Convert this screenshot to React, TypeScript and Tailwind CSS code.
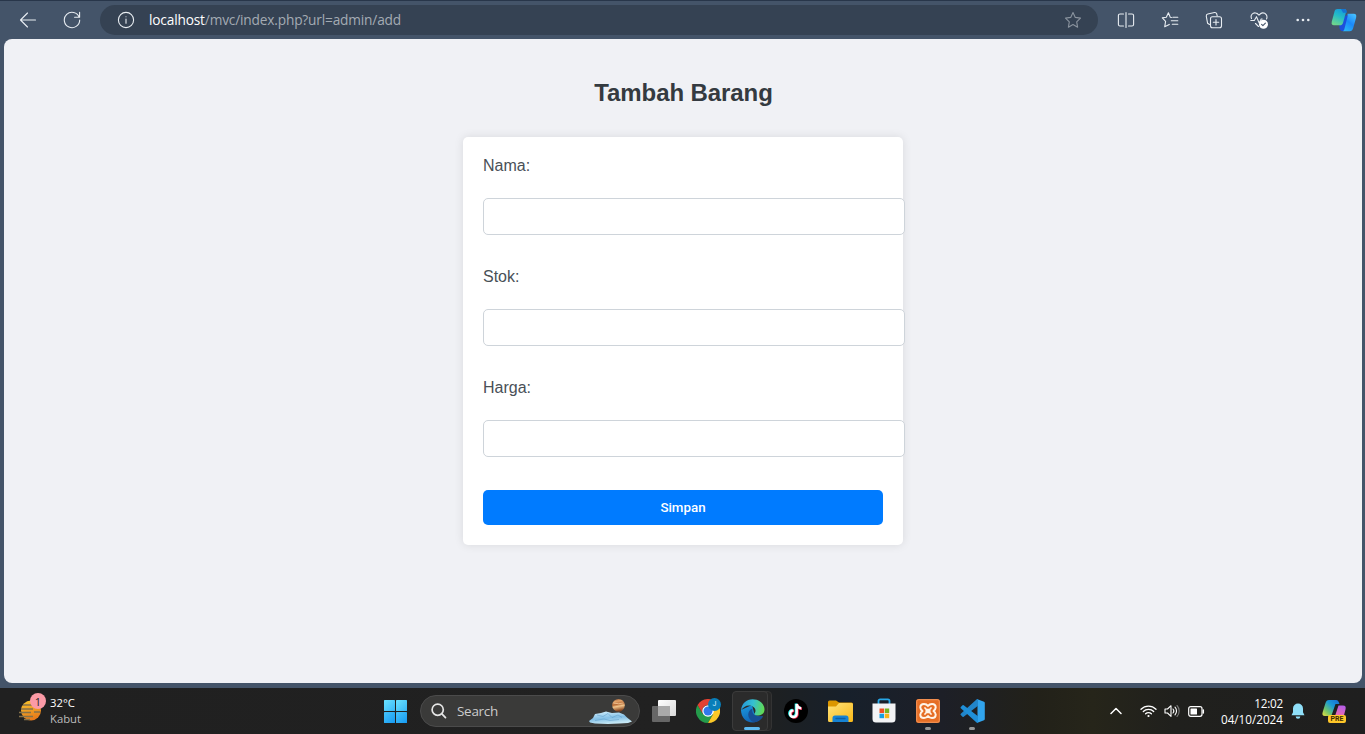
import React from "react";

const UI = "font-['Open_Sans','Noto_Sans',sans-serif]";

function Slot({ children, className = "w-11" }: { children: React.ReactNode; className?: string }) {
  return <div className={`flex h-full shrink-0 items-center justify-center ${className}`}>{children}</div>;
}

function Line({ children, size = 18, color = "#e8edf2", width = 1.1 }: { children: React.ReactNode; size?: number; color?: string; width?: number }) {
  return (
    <svg width={size} height={size} viewBox={`0 0 ${size} ${size}`} fill="none" stroke={color} strokeWidth={width} strokeLinecap="round" strokeLinejoin="round">
      {children}
    </svg>
  );
}

function BrowserBar() {
  return (
    <header className="flex h-[39px] shrink-0 items-center border-t border-[#28364a] bg-[#445469] pl-1.5">
      <Slot>
        <Line>
          <path d="M16.500 9H1.5M8.500 2L1.500 9l7 7" />
        </Line>
      </Slot>
      <Slot>
        <Line>
          <path d="M16.2 6.2A7.7 7.7 0 1 0 16.7 9M16.6 1.2v5h-5" />
        </Line>
      </Slot>
      <div className="ml-1.5 flex h-[30px] w-[998px] shrink-0 items-center rounded-full bg-[#354253] pl-[17px] pr-4">
        <Line>
          <circle cx="9" cy="9" r="7.6" />
          <path d="M9 8v4.300M9 5.700v.1" />
        </Line>
        <div className={`ml-3.5 flex-1 whitespace-nowrap text-[13.7px] leading-5 tracking-[-0.17px] text-[#a4abb3] ${UI}`}>
          <span className="text-white">localhost</span>/mvc/index.php?url=admin/add
        </div>
        <Line color="#8a939e">
          <path d="M9 1.5l2.3 4.9 5.2.7-3.8 3.7.9 5.4L9 13.6l-4.6 2.6.9-5.4L1.5 7.1l5.2-.7z" />
        </Line>
      </div>
      <div className="ml-1.5 flex h-full">
        <Slot>
          <Line>
            <path d="M6.500 3H3a1.600 1.600 0 0 0-1.600 1.600v8.800A1.600 1.600 0 0 0 3 15h3.500M9 1.500v15M11.500 3H15a1.600 1.600 0 0 1 1.600 1.600v8.800A1.600 1.600 0 0 1 15 15h-3.500" />
          </Line>
        </Slot>
        <Slot>
          <Line>
            <path d="M10.500 6.500L9.300 6.300 7.400 1.800 5.300 6.300 1.300 6.900 4.600 10.300 3.700 15.800 8.300 13.400M11.800 6.200h5M10.300 9.700h6.500M11.300 13.200h5.500" />
          </Line>
        </Slot>
        <Slot>
          <Line>
            <path d="M4.500 13.500L2.600 12.300 1.300 5.300a2 2 0 0 1 1.500-2.300L9.500 1.500a2 2 0 0 1 2.200 1.300l.5 2" />
            <rect x="5.500" y="5.700" width="11" height="11" rx="2" />
            <path d="M11 8.500v5.400M8.300 11.200h5.400" />
          </Line>
        </Slot>
        <Slot className="w-[46px]">
          <Line>
            <path d="M8.500 15.500L5.500 12.500M1.500 7.500C0 4 3 1.500 5.500 1.900 7.300 2 8 3.200 9 4.200 10 3.200 10.800 2 12.500 1.900 15.500 1.700 18 4.500 16.500 8M.8 9.500h3.500L6.500 5.700l2.700 6.300 2-4h1" />
            <circle cx="13.500" cy="13.300" r="4.500" fill="#fff" stroke="none" />
            <path d="M11.600 13.400l1.300 1.300 2.500-2.600" stroke="#445469" />
          </Line>
        </Slot>
        <Slot className="w-[42px]">
          <svg width="14" height="4" fill="#e8edf2">
            <circle cx="1.700" cy="2" r="1.300" />
            <circle cx="7" cy="2" r="1.300" />
            <circle cx="12.300" cy="2" r="1.300" />
          </svg>
        </Slot>
        <Slot className="w-10">
          <CopilotMark />
        </Slot>
      </div>
    </header>
  );
}

function CopilotMark() {
  return (
    <svg width="26" height="24" viewBox="0 0 26 24">
      <defs>
        <linearGradient id="cpA" x1="0.700" y1="0" x2="0.300" y2="1">
          <stop stopColor="#149add" />
          <stop offset="0.450" stopColor="#25bcc6" />
          <stop offset="1" stopColor="#71d68b" />
        </linearGradient>
        <linearGradient id="cpB" x1="0.800" y1="0" x2="0.200" y2="1">
          <stop stopColor="#45bfff" />
          <stop offset="0.500" stopColor="#1a88fa" />
          <stop offset="1" stopColor="#2bb6f7" />
        </linearGradient>
      </defs>
      <path d="M8.500 16.500l6-9H18l-4.500 15.500h-2c-2.500 0-3.500-2.500-3-6.500z" fill="#1c50dc" />
      <path d="M6.500 1h7c1.500 0 2 1 1.700 2.500L12 15c-.6 1.700-1.500 2.300-3.200 2.300H3C.8 17.300.2 16 .8 13.500l2.700-10C4 1.700 5 1 6.500 1z" fill="url(#cpA)" />
      <path d="M10 1h3.500c1.500 0 2 1.200 2.600 3.800h-4z" fill="#1673d2" />
      <path d="M16.500 5.800h6.300c2.200 0 2.900 1.500 2.300 4l-3 10.500c-.6 2-1.500 2.900-3.500 2.900h-7c1.400-.3 1.600-1.300 2-2.900l3-12z" fill="url(#cpB)" />
    </svg>
  );
}

function Field({ label }: { label: string }) {
  return (
    <div className="mb-[33px]">
      <label className="block text-base leading-[18px] text-[#495057]">{label}</label>
      <input className="mt-[23px] block h-[37px] w-[422px] rounded-[5px] border border-[#ced4da] bg-white px-2.5 outline-none" />
    </div>
  );
}

function FormPage() {
  return (
    <main className="mx-1 mr-[3px] flex flex-1 flex-col items-center rounded-lg bg-[#f0f1f5] pt-10 font-['Liberation_Sans',Arial,sans-serif]">
      <h1 className="pl-px text-2xl font-bold leading-7 tracking-[-0.08px] text-[#343a40]">Tambah Barang</h1>
      <form className="mt-[30px] h-[408px] w-[440px] rounded-[5px] bg-white p-5 shadow-[0_0_10px_rgba(0,0,0,0.1)]">
        <Field label="Nama:" />
        <Field label="Stok:" />
        <Field label="Harga:" />
        <button type="button" className="flex h-[35px] w-full items-center justify-center rounded-[5px] bg-[#007bff] font-['Roboto',sans-serif] text-[13.333px] font-medium text-white">
          Simpan
        </button>
      </form>
    </main>
  );
}

function WeatherIcon() {
  return (
    <div className="relative h-7 w-7 shrink-0">
      <svg width="28" height="28" viewBox="0 0 28 28">
        <defs>
          <linearGradient id="sun" x1="0" y1="0" x2="0.300" y2="1">
            <stop stopColor="#f8c62d" />
            <stop offset="1" stopColor="#e77b1c" />
          </linearGradient>
        </defs>
        <circle cx="13" cy="13.500" r="10" fill="url(#sun)" />
        <path d="M5 8h10M3 12h12M1 15.500h12M16 15h6M1 19.500h14M6 22.500h6" stroke="#85724a" strokeWidth="1.500" />
      </svg>
      <span className={`absolute -top-1 left-3 flex h-4 w-4 items-center justify-center rounded-full bg-[#fb9aa6] text-[11px] leading-none text-[#242424] ${UI}`}>1</span>
    </div>
  );
}

function StartIcon() {
  return (
    <svg width="23" height="23" viewBox="0 0 23 23">
      <defs>
        <linearGradient id="win" x1="0" y1="0" x2="1" y2="1">
          <stop stopColor="#6be2ff" />
          <stop offset="1" stopColor="#38b8f8" />
        </linearGradient>
        <linearGradient id="winB" x1="0" y1="0" x2="1" y2="1">
          <stop stopColor="#45c3fb" />
          <stop offset="1" stopColor="#169af2" />
        </linearGradient>
      </defs>
      <rect width="11" height="11" rx="0.600" fill="url(#win)" />
      <rect x="12" width="11" height="11" rx="0.600" fill="url(#win)" />
      <rect y="12" width="11" height="11" rx="0.600" fill="url(#winB)" />
      <rect x="12" y="12" width="11" height="11" rx="0.600" fill="url(#winB)" />
    </svg>
  );
}

function SearchArt() {
  return (
    <svg width="44" height="26" viewBox="0 0 44 26">
      <defs>
        <linearGradient id="planet" x1="0" y1="0" x2="0.200" y2="1">
          <stop stopColor="#8b4d2b" />
          <stop offset="0.250" stopColor="#e1a36a" />
          <stop offset="0.500" stopColor="#b66a36" />
          <stop offset="0.650" stopColor="#f1c58c" />
          <stop offset="1" stopColor="#87451f" />
        </linearGradient>
        <linearGradient id="ice" x1="0" y1="0" x2="0.300" y2="1">
          <stop stopColor="#d8f3ff" />
          <stop offset="0.600" stopColor="#83bfe5" />
          <stop offset="1" stopColor="#c5e7f5" />
        </linearGradient>
      </defs>
      <path d="M0 23l4-3 2-4 6-1 5-1.500 6 1.500 7-.5 5 2 3 3 5 4-4 1.500-8 .5-12 .5-13-.5-5-1z" fill="url(#ice)" />
      <path d="M8 17l6 1.500 5-3 4 4 6-2.500 4 2.500M6 22.500l9-1.500 6 1.500 9-1" stroke="#5897c5" strokeWidth="1" fill="none" opacity="0.500" />
      <circle cx="29.500" cy="7.200" r="6.300" fill="url(#planet)" />
      <path d="M24.500 5q5 1.500 10 0" stroke="#f5cd9c" strokeWidth="0.800" fill="none" />
    </svg>
  );
}

function TaskViewIcon() {
  return (
    <svg width="24" height="24" viewBox="0 0 24 24">
      <defs>
        <linearGradient id="tv" x1="0" y1="0" x2="1" y2="1">
          <stop stopColor="#fff" />
          <stop offset="1" stopColor="#dadada" />
        </linearGradient>
      </defs>
      <rect y="7" width="18" height="16" rx="1" fill="#666" />
      <rect x="6" y="1" width="18" height="16" rx="1" fill="url(#tv)" />
      <path d="M6 7h12v10H6z" fill="#a9a9a9" />
    </svg>
  );
}

function ChromeIcon() {
  return (
    <div className="relative h-6 w-6">
      <svg width="24" height="24" viewBox="0 0 24 24">
        <path d="M1.600 6A12 12 0 0 1 22.400 6H12z" fill="#e34133" />
        <path d="M1.600 6A12 12 0 0 0 12 24l5.200-9L12 12 6.800 15z" fill="#249b4b" />
        <path d="M12 6h10.400A12 12 0 0 1 12 24l5.200-9z" fill="#fbc827" />
        <path d="M1.600 6l5.200 9A6 6 0 0 1 12 6z" fill="#e34133" />
        <circle cx="12" cy="12" r="5.800" fill="#fff" />
        <circle cx="12" cy="12" r="4.500" fill="#3079eb" />
      </svg>
      <span className="absolute -top-px left-3 flex h-[13px] w-[13px] items-center justify-center rounded-full bg-[#087eb9] font-['Roboto',sans-serif] text-[7px] leading-none text-[#d6efff]">J</span>
    </div>
  );
}

function EdgeIcon() {
  return (
    <svg width="25" height="24" viewBox="0 0 25 24">
      <defs>
        <linearGradient id="edA" x1="0" y1="0.300" x2="1" y2="0.450">
          <stop stopColor="#2596d9" />
          <stop offset="0.500" stopColor="#35c0d1" />
          <stop offset="1" stopColor="#61db51" />
        </linearGradient>
        <linearGradient id="edB" x1="0" y1="0" x2="0.500" y2="1">
          <stop stopColor="#1c9ce1" />
          <stop offset="1" stopColor="#1062b4" />
        </linearGradient>
      </defs>
      <path d="M1 11c0 7 5 12.500 11.500 12.500 4.500 0 8.300-2.200 10.200-5.700.2-.5-.2-.8-.7-.6-3 1-7-.1-7.700-2.700L12 6z" fill="url(#edB)" />
      <path d="M1 11.500C1.600 4.500 6.500.3 12.500.3 20 .3 24.500 5.500 24.500 10.500c0 4-3 6-6.300 6-2.500 0-4-.8-3.900-1.600.1-.7 1.200-1.200 1.200-3.200 0-3.200-3.200-5.200-6.500-5.200C5.700 6.500 2.700 8.500 1 11.500z" fill="url(#edA)" />
      <path d="M12.300 9.800c-5 1.500-6.300 9.500 1.500 13.600 3.700-.3 7-2.600 8.900-5.600.2-.5-.2-.8-.7-.6-4 1.200-10.700-.5-9.700-7.400z" fill="#174e94" />
    </svg>
  );
}

function TikTokIcon() {
  const note = "M12.700 5v9.700a3.300 3.300 0 1 1-3.300-3.300M12.700 5c.4 2.700 2 4 4.500 4.200";
  return (
    <svg width="24" height="24" viewBox="0 0 24 24" fill="none" strokeWidth="2.400">
      <circle cx="12" cy="12" r="12" fill="#000" />
      <path d={note} stroke="#25f4ee" transform="translate(-.8 -.5)" />
      <path d={note} stroke="#fe2c55" transform="translate(.8 .5)" />
      <path d={note} stroke="#fff" />
    </svg>
  );
}

function FolderIcon() {
  return (
    <svg width="25" height="23" viewBox="0 0 25 23">
      <defs>
        <linearGradient id="fold" x1="0" y1="0" x2="1" y2="1">
          <stop stopColor="#ffe37b" />
          <stop offset="1" stopColor="#f8b817" />
        </linearGradient>
      </defs>
      <path d="M0 2a1.500 1.500 0 0 1 1.500-1.500H8l3 2h12.500A1.500 1.500 0 0 1 25 4v8H0z" fill="#dc9700" />
      <path d="M0 6.500h8L11 3h12.500A1.500 1.500 0 0 1 25 4.500v16a1.500 1.500 0 0 1-1.500 1.500h-22A1.500 1.500 0 0 1 0 20.500z" fill="url(#fold)" />
      <path d="M4.500 22v-4a2.500 2.500 0 0 1 2.500-2.500h11a2.500 2.500 0 0 1 2.500 2.500v4z" fill="#1683d4" />
      <path d="M8 18.500h9" stroke="#0b5fa7" strokeWidth="1.300" strokeLinecap="round" />
    </svg>
  );
}

function StoreIcon() {
  return (
    <svg className="-mt-px" width="24" height="25" viewBox="0 0 24 25">
      <path d="M6.500 7V3a1.600 1.600 0 0 1 1.600-1.600h7.800A1.600 1.600 0 0 1 17.500 3v4" stroke="#27a7e7" strokeWidth="1.800" fill="none" />
      <path d="M.5 5.500h23V21a3.500 3.500 0 0 1-3.500 3.500H4A3.500 3.500 0 0 1 .5 21z" fill="#f2f3f5" />
      <path d="M7.500 10.500H12V15H7.500z" fill="#f05025" />
      <path d="M12.700 10.500h4.500V15h-4.500z" fill="#78b420" />
      <path d="M7.500 15.700H12v4.500H7.500z" fill="#18a0e2" />
      <path d="M12.700 15.700h4.500v4.500h-4.500z" fill="#f8b51c" />
    </svg>
  );
}

function XamppIcon() {
  return (
    <svg width="24" height="24" viewBox="0 0 24 24">
      <rect width="24" height="24" rx="2.500" fill="#e66e25" />
      <rect x="0.700" y="0.700" width="22.600" height="22.600" rx="2" fill="none" stroke="#f2955a" strokeWidth="1" />
      <path
        d="M12 7C10.800 5.300 9.500 5 8 5 5.800 5 4.300 6.500 4.300 8.500c0 1.500.9 2.400 2.200 3.500C5.200 13 4.300 14 4.300 15.500 4.300 17.500 5.800 19 8 19c1.500 0 2.800-.5 4-2 1.200 1.500 2.500 2 4 2 2.200 0 3.700-1.500 3.700-3.500 0-1.500-.9-2.500-2.200-3.500 1.300-1.100 2.200-2 2.200-3.500C19.700 6.500 18.200 5 16 5c-1.500 0-2.800.3-4 2z"
        fill="none"
        stroke="#fff4e8"
        strokeWidth="2"
        strokeLinejoin="round"
      />
      <path d="M9 9l1.300 1.500h3.400L15 9M9 15l1.300-1.500h3.400L15 15M10 12h4" fill="none" stroke="#fff4e8" strokeWidth="1.700" strokeLinecap="round" strokeLinejoin="round" />
    </svg>
  );
}

function CodeIcon() {
  return (
    <svg width="25" height="24" viewBox="0 0 25 24">
      <path d="M17.500.2l6.500 2.500a1.300 1.300 0 0 1 .8 1.200v16.200a1.300 1.300 0 0 1-.8 1.200l-6.500 2.500z" fill="#31a4ed" />
      <path d="M18 .2v6.600L3.700 17.800a1 1 0 0 1-1.200 0L.8 16a.9.900 0 0 1 0-1.300L16.500.5c.4-.4 1-.5 1.500-.3z" fill="#2185ca" />
      <path d="M18 23.800v-6.600L3.700 6.200a1 1 0 0 0-1.200 0L.8 8a.9.900 0 0 0 0 1.300l15.700 14.200c.4.400 1 .5 1.500.3z" fill="#1f8fd8" />
    </svg>
  );
}

function TaskItem({ children, running = false }: { children: React.ReactNode; running?: boolean }) {
  return (
    <div className="relative flex h-full w-11 shrink-0 items-center justify-center">
      {children}
      {running && <span className="absolute bottom-1 left-[19px] h-[3px] w-1.5 rounded-full bg-[#969696]" />}
    </div>
  );
}

function Tray() {
  return (
    <div className="ml-auto flex h-full items-center pr-[17px]">
      <svg className="mr-[18px]" width="12" height="8" fill="none" stroke="#fff" strokeWidth="1.500" strokeLinecap="round" strokeLinejoin="round">
        <path d="M1 6.500L6 1.500l5 5" />
      </svg>
      <svg width="17" height="14" viewBox="0 0 17 14" fill="none" stroke="#fff" strokeWidth="1.300" strokeLinecap="round">
        <path d="M1 5.200a10.500 10.500 0 0 1 15 0M3.300 7.500a7.300 7.300 0 0 1 10.400 0M5.600 9.800a4.100 4.100 0 0 1 5.800 0" />
        <circle cx="8.500" cy="12" r="1.100" fill="#fff" stroke="none" />
      </svg>
      <svg className="ml-[7px]" width="17" height="14" viewBox="0 0 17 14" fill="none" stroke="#fff" strokeWidth="1.100" strokeLinecap="round" strokeLinejoin="round">
        <path d="M1 5v4h2.500L7 12.300V1.700L3.500 5zM9 5a3 3 0 0 1 0 4M11 3.200a5.500 5.500 0 0 1 0 7.600" />
        <path d="M13 1.500a8 8 0 0 1 0 11" stroke="#777" />
      </svg>
      <svg className="ml-[7px]" width="17" height="11" viewBox="0 0 17 11" fill="none">
        <rect x="0.700" y="0.700" width="13.300" height="9.600" rx="2" stroke="#fff" strokeWidth="1.200" />
        <rect x="2.500" y="2.500" width="6.500" height="6" rx="0.500" fill="#fff" />
        <path d="M15.300 4v3" stroke="#fff" strokeWidth="1.500" strokeLinecap="round" />
      </svg>
      <div className={`ml-4 whitespace-nowrap text-right text-[11.700px] leading-4 text-white ${UI}`}>
        <div className="tracking-[-0.200px]">12:02</div>
        <div>04/10/2024</div>
      </div>
      <svg className="ml-2" width="14" height="16" viewBox="0 0 14 16" fill="#8fdff8">
        <path d="M7 .5a5 5 0 0 1 5 5v3.700l1.500 3.100H.5L2 9.200V5.500a5 5 0 0 1 5-5zM4.700 13.500h4.600a2.300 2.300 0 0 1-4.600 0z" />
      </svg>
      <div className="relative ml-[17px] h-6 w-[26px]">
        <svg width="26" height="24" viewBox="0 0 26 24">
          <defs>
            <linearGradient id="preA" x1="1" y1="0" x2="0" y2="1">
              <stop stopColor="#1669d8" />
              <stop offset="0.400" stopColor="#1b9bd5" />
              <stop offset="0.700" stopColor="#6dc36d" />
              <stop offset="1" stopColor="#eee13b" />
            </linearGradient>
            <linearGradient id="preB" x1="0.600" y1="0" x2="0.300" y2="1">
              <stop stopColor="#b55ce7" />
              <stop offset="1" stopColor="#ff729b" />
            </linearGradient>
          </defs>
          <path d="M7 1h7c2 0 2.500 1.300 3.500 4h-4L10 15c-.5 1.500-1 2-2.500 2H3c-2.500 0-3-1.500-2.300-4L3.500 4C4.200 2 5 1 7 1z" fill="url(#preA)" />
          <path d="M16.500 6.500H21c2.500 0 3.200 1.500 2.500 4L21 20h-9z" fill="url(#preB)" />
        </svg>
        <span className="absolute left-[6px] top-4 flex h-2 w-[18px] items-center justify-center rounded-[2px] bg-[#ffc629] font-['Roboto',sans-serif] text-[7px] font-bold leading-none text-[#3c2c00]">PRE</span>
      </div>
    </div>
  );
}

function Taskbar() {
  return (
    <footer className="flex h-[46px] shrink-0 items-center bg-[linear-gradient(90deg,#202020_0%,#212121_50%,#1d2022_57%,#17202b_62%,#1d1f27_69%,#222119_76%,#26251a_80%,#20201d_86%,#1f1f1f_100%)]">
      <div className="flex h-full w-[373px] shrink-0 items-center pl-[18px]">
        <WeatherIcon />
        <div className={`ml-1 text-[11.300px] leading-4 text-white ${UI}`}>
          <div>32°C</div>
          <div className="text-[#bcbcbc]">Kabut</div>
        </div>
      </div>
      <Slot>
        <StartIcon />
      </Slot>
      <div className="ml-[3px] mr-0.5 flex h-8 w-[220px] shrink-0 items-center rounded-full border border-[#4b4b4b] bg-[#3a3a39] pl-2.5 pr-1.5">
        <svg width="16" height="16" viewBox="0 0 16 16" fill="none" stroke="#e5e5e5" strokeWidth="1.700" strokeLinecap="round">
          <circle cx="6.700" cy="6.700" r="5.600" />
          <path d="M10.900 10.900L14.500 14.700" />
        </svg>
        <span className={`ml-2.5 flex-1 text-[13.500px] leading-5 tracking-[-0.300px] text-[#cbcbcb] ${UI}`}>Search</span>
        <SearchArt />
      </div>
      <TaskItem><TaskViewIcon /></TaskItem>
      <TaskItem><ChromeIcon /></TaskItem>
      <div className="relative flex h-full w-11 shrink-0 items-center justify-center">
        <span className="absolute left-[7px] top-[3px] h-10 w-[35px] rounded border border-[#333] bg-[#272727]" />
        <span className="absolute left-[2px] top-[3px] h-10 w-9 rounded border border-[#3b3b3b] bg-[#2b2b2b]" />
        <span className="relative"><EdgeIcon /></span>
        <span className="absolute bottom-1 left-[14px] h-[3px] w-4 rounded-full bg-[#5db9f0]" />
      </div>
      <TaskItem><TikTokIcon /></TaskItem>
      <TaskItem><FolderIcon /></TaskItem>
      <TaskItem><StoreIcon /></TaskItem>
      <TaskItem running><XamppIcon /></TaskItem>
      <TaskItem running><CodeIcon /></TaskItem>
      <Tray />
    </footer>
  );
}

export default function App() {
  return (
    <div className="flex h-[734px] w-[1365px] flex-col overflow-hidden bg-[#445469]">
      <BrowserBar />
      <FormPage />
      <div className="h-[5px] shrink-0" />
      <Taskbar />
    </div>
  );
}
